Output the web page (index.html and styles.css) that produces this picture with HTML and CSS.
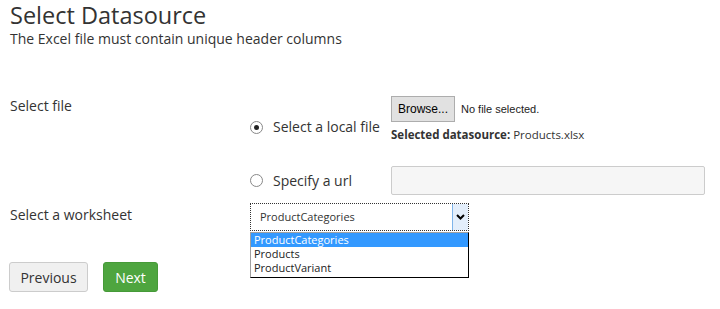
FILE: index.html
```html
<!DOCTYPE html>
<html lang="en">

<head>
  <meta charset="UTF-8">
  <title>Select Datasource</title>
  <link rel="stylesheet" href="styles.css">
</head>

<body>
  <h1 class="title">Select Datasource</h1>
  <p class="subtitle">The Excel file must contain unique header columns</p>

  <div class="form">
    <div class="label">Select file</div>
    <div class="choice choice-local">
      <span class="radio checked"></span>
      <span>Select a local file</span>
    </div>
    <div class="file-field">
      <div class="file-row">
        <span class="browse">Browse...</span>
        <span class="no-file">No file selected.</span>
      </div>
      <div class="selected"><b>Selected datasource:</b> Products.xlsx</div>
    </div>

    <div class="row-url"></div>
    <div class="choice row-url">
      <span class="radio"></span>
      <span>Specify a url</span>
    </div>
    <div class="url-input row-url"></div>

    <div class="label label-sheet">Select a worksheet</div>
    <div class="select-wrap">
      <div class="select">
        <span class="select-text">ProductCategories</span>
        <span class="select-arrow">
          <svg width="9" height="6" viewBox="0 0 9 6">
            <path d="M1 1 L4.5 4.5 L8 1" fill="none" stroke="#000" stroke-width="2"/>
          </svg>
        </span>
      </div>
      <ul class="options">
        <li class="active">ProductCategories</li>
        <li>Products</li>
        <li>ProductVariant</li>
      </ul>
    </div>
  </div>

  <div class="actions">
    <button class="btn btn-prev">Previous</button>
    <button class="btn btn-green">Next</button>
  </div>
</body>

</html>
```

FILE: styles.css
```css
body {
  margin: 0;
  padding: 0 10px;
  font-family: 'Open Sans', sans-serif;
  font-size: 14px;
  color: #333;
  background: #fff;
}

.title {
  margin: 0;
  font-size: 23.5px;
  font-weight: normal;
  line-height: 30px;
}

.subtitle {
  margin: 0;
  font-size: 14px;
  line-height: 18px;
}

.form {
  display: grid;
  grid-template-columns: 240px 141px 314px;
  align-items: start;
  margin-top: 48px;
}

.row-url {
  margin-top: 24px;
}

.label {
  line-height: 18px;
  padding-top: 1px;
}

.label-sheet {
  margin-top: 10px;
}

.choice {
  display: flex;
  align-items: center;
  gap: 10px;
  line-height: 18px;
}

.choice-local {
  margin-top: 22px;
}

.choice.row-url {
  align-self: center;
}

.radio {
  position: relative;
  flex: none;
  width: 13px;
  height: 13px;
  box-sizing: border-box;
  border: 1px solid #888;
  border-radius: 50%;
  background: #fff;
}

.radio.checked::after {
  content: '';
  position: absolute;
  left: 3px;
  top: 3px;
  width: 5px;
  height: 5px;
  border-radius: 50%;
  background: #222;
}

.file-row {
  display: flex;
  align-items: center;
  gap: 6px;
}

.browse {
  display: inline-block;
  width: 64px;
  height: 26px;
  box-sizing: border-box;
  border: 1px solid #adadad;
  background: #e1e1e1;
  font-family: 'Liberation Sans', sans-serif;
  font-size: 12px;
  line-height: 24px;
  text-align: center;
  color: #000;
}

.no-file {
  font-family: 'Liberation Sans', sans-serif;
  font-size: 11px;
  color: #222;
}

.selected {
  margin-top: 5px;
  font-size: 11.5px;
  line-height: 15px;
}

.url-input {
  height: 29px;
  box-sizing: border-box;
  border: 1px solid #ccc;
  border-radius: 2px;
  background: #f6f6f6;
}

.select-wrap {
  grid-column: 2 / 4;
  position: relative;
  width: 219px;
  margin-top: 8px;
}

.select {
  display: flex;
  height: 28px;
  box-sizing: border-box;
  border: 1px dotted #333;
  background: #fff;
}

.select-text {
  flex: 1;
  padding-left: 9px;
  font-size: 11px;
  line-height: 26px;
}

.select-arrow {
  width: 15px;
  display: flex;
  align-items: center;
  justify-content: center;
  background: #e3eefb;
  border-left: 1px solid #7eb4ea;
}

.options {
  position: absolute;
  z-index: 1;
  top: 29px;
  left: 0;
  width: 219px;
  margin: 0;
  padding: 0 0 2px;
  list-style: none;
  box-sizing: border-box;
  border: 1px solid #000;
  border-left-color: #a0a0a0;
  border-top-color: #a0a0a0;
  background: #fff;
  font-size: 11px;
  line-height: 14px;
  color: #222;
}

.options li {
  padding-left: 3px;
}

.options li.active {
  background: #3399ff;
  color: #fff;
}

.actions {
  display: flex;
  gap: 15px;
  margin-top: 31px;
  margin-left: -1px;
}

.btn {
  height: 30px;
  padding: 0;
  border: 1px solid #ccc;
  border-radius: 3px;
  background: #f0f0f0;
  font-family: inherit;
  font-size: 14px;
  color: #333;
}

.btn-prev {
  width: 79px;
}

.btn-green {
  width: 55px;
  background: #4ea53f;
  border-color: #469a38;
  color: #fff;
}
```
